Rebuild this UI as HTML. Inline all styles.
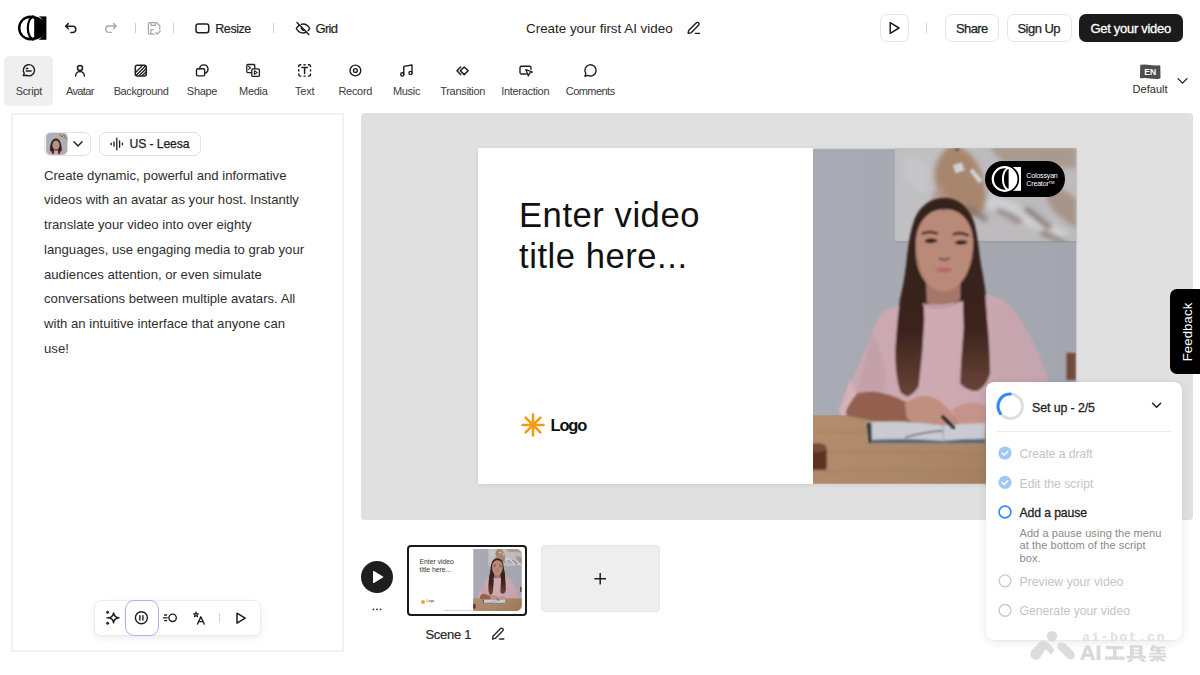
<!DOCTYPE html>
<html><head><meta charset="utf-8">
<style>
*{margin:0;padding:0;box-sizing:border-box}
html,body{width:1200px;height:675px;overflow:hidden;background:#fff;font-family:"Liberation Sans",sans-serif;color:#222}
.a{position:absolute}
.t{position:absolute;white-space:nowrap;line-height:1}
svg{position:absolute;overflow:visible}
.ic{fill:none;stroke:#1e1e1e;stroke-width:1.4;stroke-linecap:round;stroke-linejoin:round}
.btn{position:absolute;border:1px solid #e4e4e4;border-radius:7px;background:#fff}
.tb{position:absolute;top:86px;font-size:11px;color:#3c3c3c;white-space:nowrap;line-height:1;transform:translateX(-50%)}
.sep{position:absolute;width:1px;background:#d0d0d0}
</style></head><body>

<!-- ===== TOP BAR ===== -->

<!-- logo -->
<svg style="left:0;top:0" width="60" height="56" viewBox="0 0 60 56">
  <rect x="38.2" y="16.4" width="8.2" height="23.4" fill="#000"/>
  <circle cx="30.5" cy="28" r="14.4" fill="#fff"/>
  <circle cx="30.5" cy="28" r="11.3" fill="none" stroke="#000" stroke-width="2.4"/>
  <path d="M34.2 16.5 A11.4 11.4 0 0 1 34.2 39.5 Z" fill="#000"/>
  <path d="M34.2 16.4 A6.4 11.6 0 0 0 34.2 39.6" fill="none" stroke="#000" stroke-width="2.2"/>
</svg>
<!-- undo -->
<svg style="left:62px;top:19px" width="18" height="18" viewBox="0 0 18 18" class="ic"><path d="M6.3 4.6 L3.6 7.2 L6.3 9.8 M3.8 7.2 H11.2 A3.2 3.2 0 0 1 11.2 13.5 H8.8" stroke-width="1.5"/></svg>
<!-- redo -->
<svg style="left:101.5px;top:19px" width="18" height="18" viewBox="0 0 18 18" class="ic" ><path d="M11.5 4.4 L14.2 7 L11.5 9.6 M14 7 H6.8 A3.2 3.2 0 0 0 6.8 13.4 H9.2" stroke="#a8a8a8" stroke-width="1.4"/></svg>
<div class="sep" style="left:134.5px;top:23px;height:10px;background:#cfcfcf"></div>
<!-- save -->
<svg style="left:145px;top:19px" width="18" height="18" viewBox="0 0 18 18" class="ic"><path d="M9.5 15.2 H4.6 A1.2 1.2 0 0 1 3.4 14 V4.8 A1.2 1.2 0 0 1 4.6 3.6 H11.6 L14.8 6.8 V10 M6 3.6 V6.4 H10.4 V3.6 M5.8 15 V10.6 H8.2" stroke="#a8a8a8" stroke-width="1.25"/><path d="M10.8 13.6 L12.2 15 L15.2 12" stroke="#a8a8a8" stroke-width="1.25"/></svg>
<div class="sep" style="left:172.5px;top:23px;height:10px;background:#cfcfcf"></div>
<!-- resize -->
<svg style="left:195px;top:23px" width="15" height="11" viewBox="0 0 15 11" class="ic"><rect x="1" y="1" width="12.8" height="8.8" rx="2.2" stroke-width="1.5"/></svg>
<div class="t" style="left:215.3px;top:22.5px;font-size:12.5px;color:#1e1e1e;letter-spacing:-0.45px;-webkit-text-stroke:0.2px #1e1e1e">Resize</div>
<div class="sep" style="left:273px;top:23px;height:10px;background:#d6d6d6"></div>
<!-- grid (eye off) -->
<svg style="left:295px;top:21px" width="16" height="15" viewBox="0 0 16 15" class="ic"><path d="M2 1.6 L13.8 13.4" stroke-width="1.4"/><path d="M4.2 4.3 C2.9 5.2 1.9 6.4 1.3 7.5 C2.6 10 5 12 8 12 C9.2 12 10.3 11.7 11.2 11.1 M6.3 3.3 C6.9 3.1 7.4 3 8 3 C11 3 13.4 5 14.7 7.5 C14.3 8.3 13.7 9.1 13 9.8 M6.6 6.2 A2.1 2.1 0 0 0 9.4 9" stroke-width="1.4"/></svg>
<div class="t" style="left:315.5px;top:22px;font-size:13px;color:#1e1e1e;letter-spacing:-0.7px;-webkit-text-stroke:0.2px #1e1e1e">Grid</div>
<!-- title -->
<div class="t" style="left:526px;top:22px;font-size:13.4px;color:#1e1e1e">Create your first AI video</div>
<svg style="left:686px;top:21px" width="16" height="14" viewBox="0 0 16 14" class="ic"><path d="M2.2 12.4 L2.6 9.6 L10.4 1.8 A1.4 1.4 0 0 1 12.4 1.8 L12.7 2.1 A1.4 1.4 0 0 1 12.7 4.1 L4.9 11.9 Z M9.4 12.4 H13.6" stroke-width="1.4"/></svg>
<!-- right buttons -->
<div class="btn" style="left:880px;top:14px;width:28.5px;height:28px"></div>
<svg style="left:888px;top:21px" width="13" height="14" viewBox="0 0 13 14" class="ic"><path d="M2.2 1.6 L11 7 L2.2 12.4 Z" stroke-width="1.5"/></svg>
<div class="sep" style="left:926px;top:23px;height:10px;background:#d0d0d0"></div>
<div class="btn" style="left:945px;top:14px;width:54px;height:28px"></div>
<div class="t" style="left:956px;top:22px;font-size:13px;color:#1e1e1e;letter-spacing:-0.6px;-webkit-text-stroke:0.25px #1e1e1e">Share</div>
<div class="btn" style="left:1007px;top:14px;width:65px;height:28px"></div>
<div class="t" style="left:1017.5px;top:22px;font-size:13px;color:#1e1e1e;letter-spacing:-0.55px;-webkit-text-stroke:0.25px #1e1e1e">Sign Up</div>
<div class="a" style="left:1079px;top:14px;width:104px;height:28px;background:#1b1b1b;border-radius:7px"></div>
<div class="t" style="left:1090.5px;top:22px;font-size:13px;color:#fff;letter-spacing:-0.3px;-webkit-text-stroke:0.3px #fff">Get your video</div>


<!-- ===== TOOLBAR ===== -->
<div class="a" style="left:4px;top:56px;width:49px;height:50px;background:#efefef;border-radius:5px"></div>
<!-- toolbar icons -->
<svg style="left:0;top:56px" width="620" height="30" viewBox="0 56 620 30" class="ic">
  <!-- script -->
  <path d="M23.3 75.6 L24.2 73.2 A5.6 5.6 0 1 1 26.6 75.3 Z" stroke-width="1.4"/>
  <path d="M26.2 68.5 H27.9 M26.2 71 H31.2" stroke-width="1.3"/>
  <!-- avatar -->
  <circle cx="80" cy="67.9" r="2.5" stroke-width="1.5"/>
  <path d="M75.6 76 A4.4 4.4 0 0 1 84.4 76" stroke-width="1.5"/>
  <!-- background -->
  <rect x="135.3" y="65.3" width="11" height="10.6" rx="2" stroke-width="1.5"/>
  <path d="M136 72 L142 66 M136.5 75 L145.5 66 M139.5 75.3 L145.8 69 M142.6 75.3 L145.8 72.2" stroke-width="1.3"/>
  <!-- shape -->
  <path d="M199.6 68.7 A4.2 4.2 0 1 1 204.7 73.2" stroke-width="1.4"/>
  <rect x="196.5" y="68.7" width="8.2" height="7.2" rx="1.4" stroke-width="1.4"/>
  <!-- media -->
  <path d="M251.5 72.6 H247.8 A1 1 0 0 1 246.8 71.6 V65.5 A1 1 0 0 1 247.8 64.5 H253.8 A1 1 0 0 1 254.8 65.5 V68.6" stroke-width="1.3"/>
  <path d="M248.5 66.3 L250.6 67.9 L248.5 69.4" stroke-width="1.1"/>
  <rect x="251.8" y="68.8" width="7.6" height="7.6" rx="1.2" stroke-width="1.3"/>
  <path d="M254.4 70.8 L257.2 72.6 L254.4 74.4 Z" stroke-width="1.1"/>
  <!-- text -->
  <path d="M298.7 67.2 V66.3 A1.6 1.6 0 0 1 300.3 64.7 H301.3 M303.5 64.7 H305.6 M307.8 64.7 H308.9 A1.6 1.6 0 0 1 310.5 66.3 V67.2 M310.5 69.3 V71.4 M310.5 73.6 V74.5 A1.6 1.6 0 0 1 308.9 76.1 H307.8 M305.6 76.1 H303.5 M301.3 76.1 H300.3 A1.6 1.6 0 0 1 298.7 74.5 V73.6 M298.7 71.4 V69.3" stroke-width="1.4" stroke-linecap="butt"/>
  <path d="M301.9 67.6 H307.3 M304.6 67.6 V73.4" stroke-width="1.5"/>
  <!-- record -->
  <circle cx="355.4" cy="70.5" r="5.4" stroke-width="1.4"/>
  <circle cx="355.4" cy="70.5" r="1.9" stroke-width="1.4"/>
  <!-- music -->
  <path d="M403.8 74.2 V66.4 L412 65 V72.8" stroke-width="1.4"/>
  <circle cx="402.3" cy="74.4" r="1.6" stroke-width="1.4"/><circle cx="410.5" cy="73" r="1.6" stroke-width="1.4"/>
  <!-- transition -->
  <path d="M460.6 67 L457 70.8 L460.6 74.6" stroke-width="1.5"/>
  <path d="M464.2 67 L468.2 70.8 L464.2 74.6 L460.3 70.8 Z" stroke-width="1.5"/>
  <!-- interaction -->
  <path d="M526.2 74 H521.4 A1.4 1.4 0 0 1 520 72.6 V67.7 A1.4 1.4 0 0 1 521.4 66.3 H529.6 A1.4 1.4 0 0 1 531 67.7 V69.2" stroke-width="1.4"/>
  <path d="M525.8 69.6 L532.4 72 L529.6 73.1 L528.4 75.9 Z" stroke-width="1.3"/>
  <!-- comments -->
  <path d="M585 76.2 L585.8 73.4 A5.6 5.6 0 1 1 588 75.4 Z" stroke-width="1.4"/>
</svg>
<div class="tb" style="left:28.8px;letter-spacing:-0.3px">Script</div>
<div class="tb" style="left:79.8px;letter-spacing:-0.65px">Avatar</div>
<div class="tb" style="left:141px;letter-spacing:-0.4px">Background</div>
<div class="tb" style="left:202px;letter-spacing:-0.3px">Shape</div>
<div class="tb" style="left:253.3px;letter-spacing:-0.3px">Media</div>
<div class="tb" style="left:304.7px;letter-spacing:-0.2px">Text</div>
<div class="tb" style="left:355.3px;letter-spacing:-0.3px">Record</div>
<div class="tb" style="left:406.5px;letter-spacing:-0.3px">Music</div>
<div class="tb" style="left:462.7px;letter-spacing:-0.3px">Transition</div>
<div class="tb" style="left:525.2px;letter-spacing:-0.3px">Interaction</div>
<div class="tb" style="left:590.2px;letter-spacing:-0.55px">Comments</div>
<!-- language -->
<svg style="left:1139px;top:64px" width="23" height="16" viewBox="0 0 23 16"><path d="M1.2 1.6 Q1 0.6 2 0.7 Q6 0.2 11 1 Q16 1.8 20.3 1.2 Q21.3 1.1 21.3 2 L21.5 13.6 Q21.5 14.6 20.5 14.7 Q16 15.2 11 14.4 Q6 13.6 2 14.2 Q1 14.3 1 13.3 Z" fill="#4d4d4d"/><text x="11.2" y="11.4" font-family="Liberation Sans" font-weight="700" font-size="8.6" fill="#fff" text-anchor="middle">EN</text></svg>
<div class="t" style="left:1132.5px;top:84px;font-size:11px;color:#2a2a2a;letter-spacing:0.05px">Default</div>
<svg style="left:1176px;top:76px" width="13" height="9" viewBox="0 0 13 9" class="ic"><path d="M2 2.6 L6.5 7.1 L11 2.6" stroke-width="1.3"/></svg>


<!-- ===== LEFT PANEL ===== -->
<div class="a" style="left:10.5px;top:112.5px;width:333px;height:539px;border:2px solid #f1f1f1"></div>
<!-- avatar pill -->
<div class="btn" style="left:44px;top:131.5px;width:47px;height:24.5px;border-color:#e2e2e2;border-radius:7px"></div>
<svg style="left:46.2px;top:133px" width="21.5" height="21.5" viewBox="0 0 21.5 21.5">
  <defs><clipPath id="av"><rect width="21.5" height="21.5" rx="4.5"/></clipPath><filter id="avb"><feGaussianBlur stdDeviation="0.5"/></filter></defs>
  <g clip-path="url(#av)">
    <rect width="22" height="22" fill="#aeb1b9"/>
    <g filter="url(#avb)">
    <path d="M10 0 L22 0 L22 9 Q16 6 12 4Z" fill="#b4aaa6"/>
    <path d="M14 1 L16 4 L18 2 L20 6" stroke="#8a6a58" stroke-width="1" fill="none"/>
    <path d="M4 22 Q3 6 10 5.5 Q16.5 6 15.8 22 Z" fill="#36201c"/>
    <ellipse cx="10" cy="12.2" rx="3.6" ry="4.6" fill="#bd8f80"/>
    <path d="M1 22 Q2 18.5 5 17.5 L7 22Z M19 22 Q18 18.5 15 17.5 L13 22Z" fill="#c2a2ab"/>
    <path d="M8 17 Q10 18.5 12 17 L12.5 22 H7.5Z" fill="#c4a4ad"/>
    </g>
  </g>
</svg>
<svg style="left:72px;top:138.6px" width="12" height="10" viewBox="0 0 12 10" class="ic"><path d="M1.9 2.8 L6 6.9 L10.1 2.8" stroke-width="1.4"/></svg>
<!-- voice pill -->
<div class="btn" style="left:98.5px;top:131.5px;width:102px;height:24.5px;border-color:#e2e2e2;border-radius:7px"></div>
<svg style="left:110px;top:137px" width="14" height="14" viewBox="0 0 14 14" class="ic"><path d="M1.2 6.2 V7.8 M4 4.8 V9.2 M6.8 1.2 V12.8 M9.6 3.8 V10.2 M12.4 6.2 V7.8" stroke-width="1.3"/></svg>
<div class="t" style="left:129.5px;top:138px;font-size:12.2px;color:#1e1e1e;letter-spacing:-0.1px;-webkit-text-stroke:0.25px #1e1e1e">US - Leesa</div>
<!-- paragraph -->
<div class="a" style="left:44px;top:163.6px;width:300px;font-size:13.15px;line-height:24.73px;color:#2e2e2e;white-space:nowrap">Create dynamic, powerful and informative<br>videos with an avatar as your host. Instantly<br>translate your video into over eighty<br>languages, use engaging media to grab your<br>audiences attention, or even simulate<br>conversations between multiple avatars. All<br>with an intuitive interface that anyone can<br>use!</div>
<!-- script toolbar -->
<div class="a" style="left:94px;top:600px;width:167px;height:35.5px;background:#fff;border:1px solid #ececec;border-radius:7px;box-shadow:0 3px 7px rgba(0,0,0,.07)"></div>
<div class="a" style="left:124.5px;top:600px;width:34.2px;height:35.5px;border:1.8px solid #c6a6f1;border-radius:9px"></div>
<svg style="left:94px;top:600px" width="167" height="36" viewBox="94 600 167 36" class="ic">
  <!-- sparkle -->
  <path d="M113.6 613 Q114.2 617.2 118.8 617.8 Q114.2 618.4 113.6 622.6 Q113 618.4 108.6 617.8 Q113 617.2 113.6 613 Z" stroke-width="1.6"/>
  <circle cx="107.6" cy="612.3" r="1.1" fill="#1e1e1e" stroke-width="0.8"/><circle cx="107.6" cy="623.3" r="1.1" fill="#1e1e1e" stroke-width="0.8"/>
  <path d="M106.8 617.8 H108.4" stroke-width="1.3"/>
  <!-- pause -->
  <circle cx="141.4" cy="617.8" r="6" stroke-width="1.4"/>
  <path d="M139.9 615.6 V620 M142.9 615.6 V620" stroke-width="1.4"/>
  <!-- speed -->
  <circle cx="172.6" cy="617.8" r="3.7" stroke-width="1.4"/>
  <path d="M163.3 617.8 H167.2 M164.6 615 H166.6 M164.6 620.6 H166.6" stroke-width="1.3"/>
  <!-- translate -->
  <path d="M196 612 L196.6 613.8 H198.4 L197 614.9 L197.5 616.7 L196 615.6 L194.5 616.7 L195 614.9 L193.6 613.8 H195.4 Z" stroke-width="1.1"/>
  <path d="M197.5 624 L200.8 616.8 L204.2 624 M198.7 621.6 H203" stroke-width="1.4"/>
  <!-- play -->
  <path d="M237 613.2 L245.2 618.2 L237 623.2 Z" stroke-width="1.5"/>
</svg>
<div class="sep" style="left:219px;top:613px;height:10px;background:#d4d4d4"></div>


<!-- ===== CANVAS ===== -->
<div class="a" style="left:361px;top:113px;width:832px;height:406.5px;background:#e0e0e0;border-radius:4px"></div>
<div class="a" style="left:478px;top:148px;width:598px;height:336px;background:#fff;box-shadow:0 1px 4px rgba(0,0,0,.09)"></div>
<div class="t" style="left:519px;top:195px;font-size:34.6px;line-height:41.1px;color:#111;letter-spacing:0.55px">Enter video<br>title here...</div>
<svg style="left:520px;top:412px" width="26" height="26" viewBox="0 0 26 26"><g stroke="#f39a12" stroke-width="2.6" stroke-linecap="round"><path d="M13 2.5 V23.5 M2.5 13 H23.5 M5.6 5.6 L20.4 20.4 M20.4 5.6 L5.6 20.4"/></g></svg>
<div class="t" style="left:550.5px;top:417px;font-size:16.5px;color:#111;font-weight:700;letter-spacing:-1.2px">Logo</div>
<!-- PHOTO -->
<svg style="left:812.5px;top:148px" width="263.5" height="336" viewBox="0 0 264 336" id="photo">
  <defs>
    <filter id="bl" x="-20%" y="-20%" width="140%" height="140%"><feGaussianBlur stdDeviation="1.3"/></filter>
    <filter id="bl2" x="-30%" y="-30%" width="160%" height="160%"><feGaussianBlur stdDeviation="4"/></filter>
    <filter id="bl3" x="-30%" y="-30%" width="160%" height="160%"><feGaussianBlur stdDeviation="2.5"/></filter>
    <clipPath id="pc"><rect width="264" height="336"/></clipPath>
    <linearGradient id="wall" x1="0" y1="0" x2="1" y2="0"><stop offset="0" stop-color="#a8abb3"/><stop offset="0.45" stop-color="#a6a9b1"/><stop offset="1" stop-color="#a3a6ae"/></linearGradient>
    <linearGradient id="wood" x1="0" y1="0" x2="1" y2="0.3"><stop offset="0" stop-color="#b28e6e"/><stop offset="0.6" stop-color="#ab8768"/><stop offset="1" stop-color="#a07c5e"/></linearGradient>
    <linearGradient id="hairg" x1="0" y1="0" x2="0" y2="1"><stop offset="0" stop-color="#36201c"/><stop offset="0.5" stop-color="#3c241e"/><stop offset="1" stop-color="#6a4436"/></linearGradient><linearGradient id="pink" x1="0" y1="0" x2="1" y2="0"><stop offset="0" stop-color="#cba8b0"/><stop offset="0.5" stop-color="#cdaab2"/><stop offset="1" stop-color="#c4a2ab"/></linearGradient>
  </defs>
  <g clip-path="url(#pc)" id="photoG">
  <rect width="264" height="336" fill="url(#wall)"/>
  <!-- painting -->
  <rect x="82" y="-2" width="184" height="96" fill="#bdbbbd"/>
  <g clip-path="url(#pt)">
  <g filter="url(#bl3)">
    <path d="M82 0 L130 0 Q120 40 128 94 L82 94Z" fill="#c0bfc2"/>
    <path d="M140 -4 Q118 10 122 34 Q128 56 146 66 Q160 74 172 60 Q176 40 166 18 Q158 2 140 -4Z" fill="#a8866e"/>
    <path d="M128 36 Q116 46 118 60 Q130 72 150 80 Q152 66 140 56 Q132 46 128 36Z" fill="#b09682" opacity=".8"/>
    <path d="M176 -2 L264 -2 L264 20 Q230 18 190 14 Z" fill="#aa9a8e"/>
    <path d="M232 36 Q254 40 264 52 L264 80 Q246 70 236 56Z" fill="#a48e80" opacity=".85"/>
    <path d="M92 10 Q108 8 116 22 L114 46 Q100 40 92 30Z" fill="#c6c6ca"/>
    <path d="M180 44 Q215 62 256 84 L246 92 Q204 72 172 58Z" fill="#cfd0d4" opacity=".9"/>
  </g>
  <g filter="url(#bl)">
    <path d="M143 -1 L147 -1 L146 3 L142 3Z" fill="#6f625c"/>
    <path d="M140 17 L149 14 L152 22 L143 25Z" fill="#cfd1d7"/>
    <path d="M160 20 L170 32 L166 35 L157 23Z" fill="#cfd1d7"/>
  </g>
  <g filter="url(#bl3)" opacity=".8">
    <path d="M156 58 Q166 62 176 70 L172 74 Q162 66 153 61Z" fill="#7f6e66"/>
    <path d="M186 60 Q198 64 210 72 L206 76 Q194 68 183 64Z" fill="#86746a"/>
    <path d="M214 58 Q226 66 240 78 L236 82 Q222 70 211 62Z" fill="#7a6860"/>
    <path d="M230 82 Q240 86 254 94 L250 96 Q238 90 227 86Z" fill="#7a6860"/>
  </g>
  </g>
  <rect x="82" y="92.8" width="182" height="1.6" fill="#8e8c8e" opacity=".6"/>
  <!-- chair right -->
  <rect x="254" y="205" width="9" height="27" fill="#74483a" filter="url(#bl)"/>
  <g filter="url(#bl)">
    <!-- hair back (head) -->
    <path d="M132 49.5 C118 50 108 57 102 70 C97 84 95 100 93.5 115 C91.5 135 89 150 86 172 L176 172 C174 150 171 130 168 115 C166 100 165 88 162 76 C158 62 148 50 132 49.5Z" fill="#36201c"/>
    <!-- sweater -->
    <path d="M79.5 159.5 Q66 162 58.8 186 Q52 202 46.9 216 Q40 230 35 240 Q29 250 26.2 260.5 L29 268 L244 268 L236 232 Q232 222 229.3 217 Q225 207 222 199.6 Q218 190 215 183.6 Q210 174 204.4 167.6 Q198 158 192 153.3 Q184 148 174.2 147 L144.6 154.4 L109.4 156.5Z" fill="url(#pink)"/>
    <!-- sleeve shading -->
    <path d="M58 186 Q70 200 74 230 Q72 245 66 250 Q50 250 40 255 Q48 230 58 186Z" fill="#bf9da6" opacity=".6"/><path d="M204 168 Q190 190 192 240 L236 232 Q226 195 204 168Z" fill="#c6a7b0" opacity=".5"/>
    <!-- hair strands -->
    <path d="M93.5 118 Q90 140 87 152 Q84 175 82.5 200 Q82 230 88 245 L94.5 249 Q102 246 106 238 Q110 205 111.5 172 Q111 150 109.4 140 L104 125Z" fill="url(#hairg)"/>
    <path d="M156 118 L150.5 140 Q150 160 151 180 Q148 215 147.5 236 Q155 244 165.5 243 Q175 236 177.5 225 Q177 195 174.5 172 Q173 150 172 140 L168 118Z" fill="url(#hairg)"/>
    <!-- neck -->
    <path d="M113 128 L148 126 L147.5 152 Q131 160 114 155Z" fill="#a6766a"/>
    <!-- neckline ribbing -->
    <path d="M110 156 Q130 164 146 154" stroke="#b896a0" stroke-width="2" fill="none"/>
    <!-- face -->
    <path d="M132 61 C115 61 104 74 103 94 C102 110 105 124 112 133 C118 140 125 143.5 131 143.5 C138 143.5 147 138 153 128 C158 118 160.5 106 160.5 94 C160 74 149 61 132 61Z" fill="#ba8a79"/>
    <path d="M104 96 Q106 120 114 134 Q108 128 104 110Z" fill="#9f7063" opacity=".6"/><path d="M160 96 Q158 120 150 132 Q156 126 160 110Z" fill="#9f7063" opacity=".6"/>
    <!-- hair parting -->
    <path d="M132 50 L131 64" stroke="#4a342c" stroke-width="1" opacity=".5"/>
  </g>
  <!-- face details -->
  <g filter="url(#bl)" opacity=".95">
    <path d="M109 85.5 Q117 82 125 85.5" stroke="#3a2420" stroke-width="2" fill="none"/>
    <path d="M140 86.5 Q148 83 156 87.5" stroke="#3a2420" stroke-width="2" fill="none"/>
    <path d="M111.5 93 Q118 88.6 125 92.6 Q118.5 96.4 111.5 93Z" fill="#2a1813"/>
    <path d="M141.8 94.6 Q148.5 90.4 155.4 94.2 Q148.5 98 141.8 94.6Z" fill="#2a1813"/>
    <path d="M126.5 110 Q131.5 113.5 137 110" stroke="#6e463c" stroke-width="1.8" fill="none"/>
    <path d="M121.5 121.5 Q131 117.5 140.5 121.5 Q131 127.5 121.5 121.5Z" fill="#b56670"/>
  </g>
  <!-- table -->
  <rect x="0" y="267.5" width="264" height="70" fill="url(#wood)"/>
  <path d="M0 285 Q80 282 264 292 M0 305 Q120 300 264 314 M10 324 Q140 320 264 330" stroke="#94705a" stroke-width="1" fill="none" opacity=".45" filter="url(#bl)"/>
  <!-- arms & hands -->
  <g filter="url(#bl)">
    <path d="M36 248 Q48 244 60 244 Q78 246 92 254 Q100 256 104 253 L110 262 Q104 276 96 278 Q80 277 60 273 Q45 270 34 268 Q30 258 36 248Z" fill="#93604f"/>
    <path d="M92 256 Q102 249 112 248 Q122 249 130 256 Q138 262 142 270 L141 281 Q134 282 130 279 Q120 281 110 280 Q100 277 94 270Z" fill="#c08f80"/>
    <path d="M139 262 Q150 254 162 255 Q170 256 175 260 L175 281 Q160 283 148 280 Q142 272 139 262Z" fill="#c4948a"/>
  </g>
  <!-- sleeve cuff over elbow -->
  <path d="M37 232 Q33 248 25.6 264.6 L31 268 Q36 256 44 246 Q40 240 37 232Z" fill="#d4b2b8" filter="url(#bl)"/>
  <!-- notebook -->
  <g filter="url(#bl)">
    <path d="M54.2 274.4 Q75 273.2 91 273.6 Q112 275 130 277.5 Q150 275.5 172.5 275.3 L172.5 295.5 L55 295.5Z" fill="#c9cad2"/>
    <path d="M54 275 L58.5 275 L59 295.5 L55.5 295.5Z" fill="#2c343c"/>
    <path d="M60 292 Q95 290 130 293 Q150 291 172.5 291 L172.5 295.5 L56 295.5Z" fill="#586672"/>
    <path d="M92 290 Q110 284 130 283" stroke="#3c4650" stroke-width="1.2" fill="none"/>
    <path d="M130 277 L131 295" stroke="#9aa2aa" stroke-width="1"/>
  </g>
  <path d="M130 269 L141 280" stroke="#1d1d1f" stroke-width="2.8" stroke-linecap="round" filter="url(#bl)"/>
  <!-- dark object -->
  <g filter="url(#bl)">
    <rect x="-5" y="300" width="18.5" height="22" rx="2" fill="#5c3022"/>
    <ellipse cx="4" cy="300" rx="9.5" ry="4.5" fill="#7a4c3a"/>
  </g>
  </g>
  <clipPath id="pt"><rect x="82" y="-2" width="184" height="96"/></clipPath>
</svg>
<!-- badge -->
<div class="a" style="left:984.5px;top:160.5px;width:80px;height:36px;background:#000;border-radius:18px"></div>
<svg style="left:984.5px;top:160.5px" width="80" height="36" viewBox="0 0 80 36">
  <rect x="27.6" y="6" width="8.4" height="23.8" fill="#fff"/>
  <circle cx="19.6" cy="20.5" r="14.6" fill="#000" transform="translate(0,-2.5)"/>
  <circle cx="19.6" cy="18" r="11.8" fill="none" stroke="#fff" stroke-width="2.2"/>
  <path d="M23.6 6.9 A11.8 11.8 0 0 1 23.6 29.1 Z" fill="#fff"/>
  <path d="M23.6 6.9 A6.6 11.2 0 0 0 23.6 29.1" fill="none" stroke="#fff" stroke-width="2"/>
  <text x="41.3" y="17.3" font-family="Liberation Sans" font-size="7.1" fill="#fff" letter-spacing="-0.2">Colossyan</text>
  <text x="41.3" y="25.1" font-family="Liberation Sans" font-size="7.1" fill="#fff" letter-spacing="-0.2">Creator<tspan font-size="4.2" dy="-2.6">TM</tspan></text>
</svg>
<!-- feedback -->
<div class="a" style="left:1170px;top:289px;width:34px;height:85px;background:#000;border-radius:7px 0 0 7px"></div>
<div class="t" style="left:1188px;top:331.5px;font-size:13.2px;color:#fff;transform:translate(-50%,-50%) rotate(-90deg);letter-spacing:0.1px">Feedback</div>



<!-- ===== SETUP PANEL ===== -->
<div class="a" style="left:985.5px;top:381.5px;width:196px;height:258px;background:#fff;border-radius:8px;box-shadow:0 2px 10px rgba(0,0,0,.10),0 0 1px rgba(0,0,0,.12)"></div>
<svg style="left:995px;top:391px" width="31" height="31" viewBox="0 0 31 31">
  <circle cx="15.3" cy="15.3" r="12.2" fill="none" stroke="#dedede" stroke-width="3"/>
  <path d="M15.3 3.1 A12.2 12.2 0 0 0 5.4 22.5" fill="none" stroke="#2f8cf2" stroke-width="3" stroke-linecap="round"/>
</svg>
<div class="t" style="left:1032px;top:401.5px;font-size:12.4px;color:#1e1e1e;letter-spacing:-0.1px;-webkit-text-stroke:0.3px #1e1e1e">Set up - 2/5</div>
<svg style="left:1150px;top:400px" width="13" height="12" viewBox="0 0 13 12" class="ic"><path d="M2.6 3.2 L6.6 7.2 L10.6 3.2" stroke-width="1.5"/></svg>
<div class="a" style="left:996.5px;top:430.5px;width:174px;height:1px;background:#ededed"></div>
<svg style="left:996px;top:444px" width="18" height="180" viewBox="0 0 18 180">
  <circle cx="9" cy="9" r="6.6" fill="#9ec9f5"/><path d="M6.2 9.2 L8.2 11.1 L11.8 7.4" fill="none" stroke="#fff" stroke-width="1.4" stroke-linecap="round" stroke-linejoin="round"/>
  <circle cx="9" cy="38.4" r="6.6" fill="#9ec9f5"/><path d="M6.2 38.6 L8.2 40.5 L11.8 36.8" fill="none" stroke="#fff" stroke-width="1.4" stroke-linecap="round" stroke-linejoin="round"/>
  <circle cx="9" cy="68" r="5.9" fill="none" stroke="#3b87ee" stroke-width="1.6"/>
  <circle cx="9" cy="136.8" r="5.9" fill="none" stroke="#c9c9c9" stroke-width="1.4"/>
  <circle cx="9" cy="166.4" r="5.9" fill="none" stroke="#c9c9c9" stroke-width="1.4"/>
</svg>
<div class="t" style="left:1019.5px;top:447.6px;font-size:12.2px;color:#c4c4c4;letter-spacing:-0.1px">Create a draft</div>
<div class="t" style="left:1019.5px;top:477.6px;font-size:12.2px;color:#c4c4c4;letter-spacing:0px">Edit the script</div>
<div class="t" style="left:1019.5px;top:507px;font-size:12.2px;color:#1e1e1e;letter-spacing:-0.1px;-webkit-text-stroke:0.3px #1e1e1e">Add a pause</div>
<div class="a" style="left:1019.5px;top:527px;font-size:11px;line-height:12.25px;color:#8a8a8a;white-space:nowrap;letter-spacing:0.07px">Add a pause using the menu<br>at the bottom of the script<br>box.</div>
<div class="t" style="left:1019.5px;top:576px;font-size:12.2px;color:#c4c4c4;letter-spacing:0.05px">Preview your video</div>
<div class="t" style="left:1019.5px;top:605px;font-size:12.2px;color:#c4c4c4;letter-spacing:0.0px">Generate your video</div>

<!-- ===== TIMELINE ===== -->
<div class="a" style="left:361px;top:561.3px;width:32px;height:32px;border-radius:50%;background:#1e1e1e"></div>
<svg style="left:361px;top:561.3px" width="32" height="32" viewBox="0 0 32 32"><path d="M12.6 10.6 L21.6 16 L12.6 21.4 Z" fill="#fff" stroke="#fff" stroke-width="1.2" stroke-linejoin="round"/></svg>
<svg style="left:370px;top:606px" width="14" height="6" viewBox="0 0 14 6"><circle cx="3.4" cy="3.4" r="0.9" fill="#333"/><circle cx="7" cy="3.4" r="0.9" fill="#333"/><circle cx="10.6" cy="3.4" r="0.9" fill="#333"/></svg>
<div class="a" style="left:407px;top:544.5px;width:119.5px;height:71.5px;border:2.4px solid #1a1a1a;border-radius:4px;background:#fff;overflow:hidden">
  <div class="t" style="left:10.5px;top:11px;font-size:6.8px;line-height:8px;color:#333">Enter video<br>title here...</div>
  <div class="a" style="left:11.5px;top:53px;width:4px;height:4px;border-radius:50%;background:#f5a623"></div>
  <div class="t" style="left:17.5px;top:53.5px;font-size:3.5px;color:#333">Logo</div>
  <div class="a" style="left:33.6px;top:63.4px;width:29px;height:0.9px;background:#d6d6d6"></div>
  <div class="a" style="left:63.6px;top:2.6px;width:49px;height:61.5px;border-radius:0 6px 6px 0;overflow:hidden"><svg style="left:0;top:0" width="49" height="62" viewBox="0 0 264 336"><use href="#photoG"/></svg></div>
</div>
<div class="a" style="left:541px;top:544.5px;width:118.5px;height:67.5px;background:#eeeeee;border:1px solid #e6e6e6;border-radius:4px"></div>
<svg style="left:593px;top:572px" width="14" height="14" viewBox="0 0 14 14"><path d="M7.2 1 V12.6 M1.4 6.8 H13" stroke="#1e1e1e" stroke-width="1.5"/></svg>
<div class="t" style="left:425.5px;top:627.5px;font-size:13px;color:#2a2a2a;letter-spacing:-0.3px;-webkit-text-stroke:0.2px #2a2a2a">Scene 1</div>
<svg style="left:490px;top:626px" width="16" height="15" viewBox="0 0 16 15" class="ic"><path d="M2.6 13 L3 10.2 L10.6 2.6 A1.4 1.4 0 0 1 12.6 2.6 L12.8 2.8 A1.4 1.4 0 0 1 12.8 4.8 L5.2 12.4 Z M9.6 13 H13.8" stroke-width="1.4" stroke="#2a2a2a"/></svg>

<!-- ===== WATERMARK ===== -->
<svg style="left:1028px;top:628px" width="145" height="36" viewBox="0 0 145 36">
  <g fill="#dcdcdc">
    <circle cx="24" cy="8.2" r="5.2"/>
    <path d="M3 29 Q1.5 25.5 4 22 L11 14.5 Q14.5 11.5 18 13.2 Q21.5 15 24 18.5 L26.5 22 L23 26.5 L17.5 21 L11.5 30.5 Q8 34 3 29Z"/>
    <path d="M30.5 15.2 Q34 12.8 37.5 15.8 L45.8 24.2 Q48 27.5 45.8 30.2 Q42.5 33 39.5 30.2 L30.2 21 Q28 17.8 30.5 15.2Z"/>
  </g>
  <text x="54" y="12.8" font-family="Liberation Mono" font-weight="700" font-size="13.5" fill="#e0e0e0" letter-spacing="1.2">ai-bot.cn</text>
  <g fill="#d9d9d9">
    <path d="M52 32 L57.6 17.5 H61.8 L67.4 32 H63.4 L62.3 28.8 H57.1 L56 32Z M58.1 25.8 H61.3 L59.7 21Z"/>
    <rect x="68.6" y="17.5" width="3.8" height="14.5"/>
    <path d="M78 18 H95.5 V21.2 H88.5 V28.6 H96.5 V31.8 H77 V28.6 H85 V21.2 H78Z"/>
    <path d="M102 17.2 H114.5 V27.8 H118 V30.4 H98.5 V27.8 H102Z M105.6 19.7 V21.4 H111 V19.7Z M105.6 23.1 V24.6 H111 V23.1Z M105.6 26.3 V27.8 H111 V26.3Z M101.5 31 H106 L102.5 34.2 L99 33.4Z M110.5 31 H115 L118.5 33.4 L115 34.2Z"/>
    <path d="M124 17.2 H128.2 L127.2 18.6 H137.6 V20.6 H132.2 V21.8 H137 V23.6 H132.2 V24.8 H138 V26.6 H121.6 V24.8 H128.4 V23.6 H122.8 V21.8 H128.4 V20.6 H125.4 V21.8 H121.8Z M121 27.6 H138.4 V29.6 H132.6 L137.8 32.6 L134.4 34 L130.6 31 V34 H128.4 V31 L124.6 34 L121.2 32.6 L126.4 29.6 H121Z"/>
  </g>
</svg>
</body></html>
